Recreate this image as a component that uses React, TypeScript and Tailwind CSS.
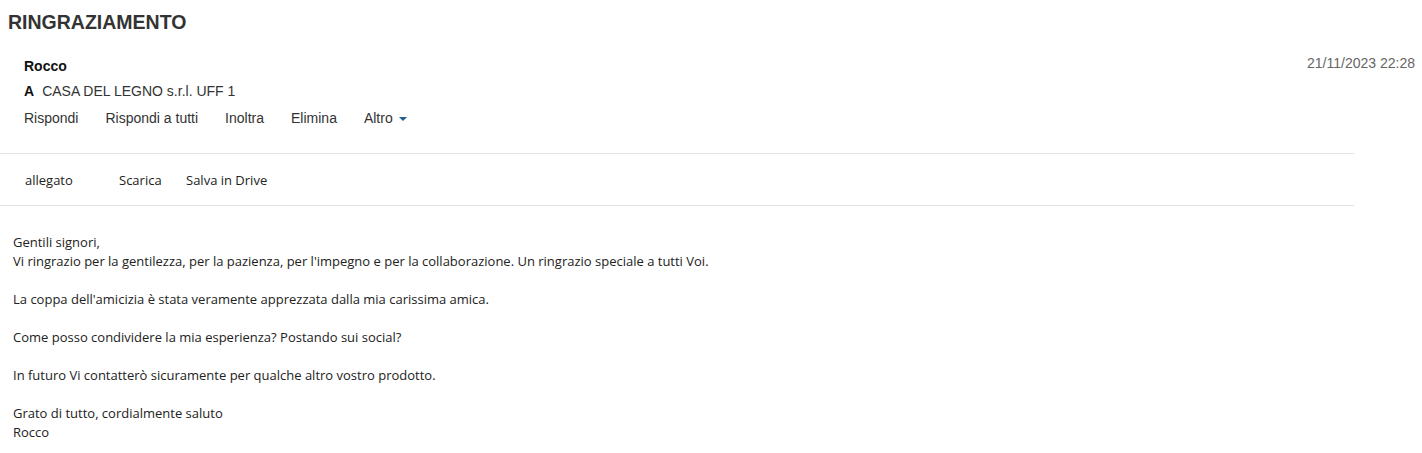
const body = [
  'Gentili signori,',
  "Vi ringrazio per la gentilezza, per la pazienza, per l'impegno e per la collaborazione. Un ringrazio speciale a tutti Voi.",
  '',
  "La coppa dell'amicizia è stata veramente apprezzata dalla mia carissima amica.",
  '',
  'Come posso condividere la mia esperienza? Postando sui social?',
  '',
  'In futuro Vi contatterò sicuramente per qualche altro vostro prodotto.',
  '',
  'Grato di tutto, cordialmente saluto',
  'Rocco',
];

const actions = ['Rispondi', 'Rispondi a tutti', 'Inoltra', 'Elimina'];

export default function App() {
  return (
    <div className="min-h-[453px] w-full bg-white text-[#333] [font-family:'Liberation_Sans',Arial,sans-serif]">
      <h1 className="px-[8px] pt-[11px] text-[19.5px] font-bold leading-[22px] text-[#333]">RINGRAZIAMENTO</h1>

      <div className="flex justify-between pl-[24px] pr-[7px] pt-[24px]">
        <div className="flex flex-col">
          <div className="text-[14px] font-bold leading-[18px] text-[#111]">Rocco</div>
          <div className="mt-[8px] flex items-center gap-[8px] text-[14px] leading-[17px]">
            <span className="font-bold text-[#111]">A</span>
            <span>CASA DEL LEGNO s.r.l. UFF 1</span>
          </div>
          <div className="mt-[10px] flex items-center gap-[27px] text-[14px] leading-[17px]">
            {actions.map((a) => (
              <span key={a}>{a}</span>
            ))}
            <span className="flex items-center gap-[6px]">
              Altro
              <span className="h-0 w-0 border-x-[4px] border-t-[4px] border-x-transparent border-t-[#1f5f8f]" />
            </span>
          </div>
        </div>
        <div className="-mt-[2px] text-[14px] leading-[17px] text-[#666]">21/11/2023 22:28</div>
      </div>

      <div className="mt-[26px] w-[1354px] border-t border-[#e3e3e3]" />
      <div className="flex h-[51px] w-[1354px] items-center pl-[25px] pt-[3px] text-[13px] text-[#222] [font-family:'Open_Sans','Noto_Sans',sans-serif]">
        <span className="w-[94px]">allegato</span>
        <span className="w-[67px]">Scarica</span>
        <span>Salva in Drive</span>
      </div>
      <div className="w-[1354px] border-t border-[#e3e3e3]" />

      <div className="px-[13px] pt-[27px] text-[13px] leading-[19px] text-[#222] [font-family:'Open_Sans','Noto_Sans',sans-serif]">
        {body.map((line, i) => (
          <div key={i} className="h-[19px] whitespace-pre">{line}</div>
        ))}
      </div>
    </div>
  );
}
